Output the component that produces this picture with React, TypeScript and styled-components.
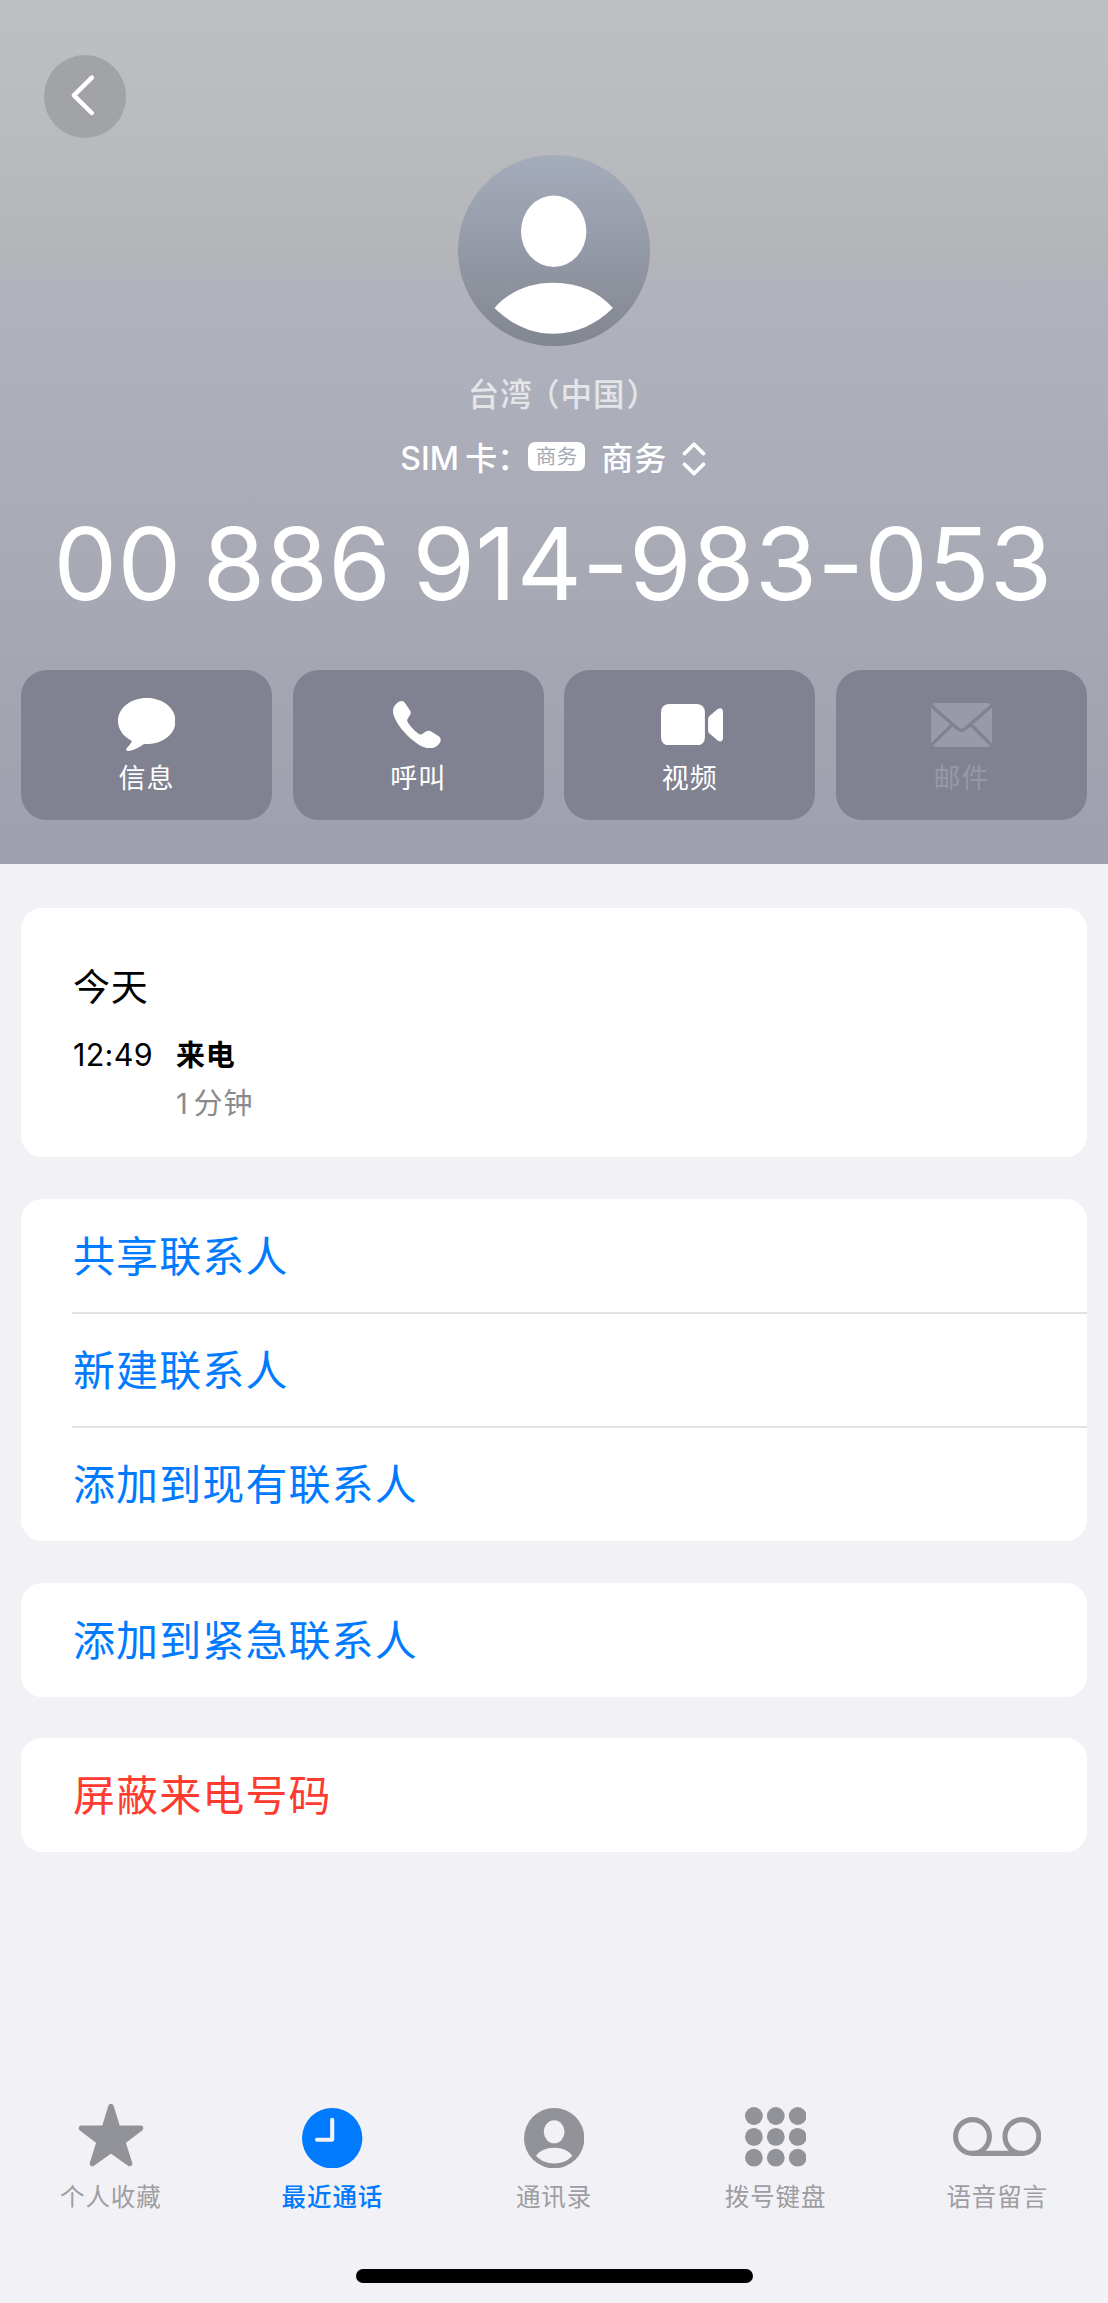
import React from 'react';
import styled, { createGlobalStyle } from 'styled-components';

const GlobalStyle = createGlobalStyle`
  *, *::before, *::after { box-sizing: border-box; }
  html, body { margin: 0; padding: 0; background: #f2f1f6; }
  body { font-family: Inter, "Noto Sans CJK SC", sans-serif; }
  svg { display: block; flex: none; }
`;

const Screen = styled.div`
  width: 1108px;
  height: 2303px;
  display: flex;
  flex-direction: column;
  overflow: hidden;
  background: #f2f1f6;
`;

const Hero = styled.header`
  height: 863.5px;
  flex: none;
  display: flex;
  flex-direction: column;
  align-items: center;
  padding: 55px 21px 0;
  background: linear-gradient(180deg, #bebfc3 0%, #babbbf 15%, #b4b5b9 29.5%, #b0b3bc 33.5%, #a9abb7 60%, #a3a5b1 80%, #9ea0ad 100%);
  color: #fff;
`;

const BackButton = styled.button`
  align-self: flex-start;
  width: 82px;
  height: 82.5px;
  margin-left: 23px;
  padding: 0;
  border: 0;
  border-radius: 50%;
  display: flex;
  align-items: center;
  justify-content: center;
  background: #a2a3a7;
`;

const Avatar = styled.div`
  width: 191.4px;
  height: 191.4px;
  flex: none;
  margin-top: 17px;
  border-radius: 50%;
  background: linear-gradient(180deg, #a5acbb, #828690);
`;

const Region = styled.div`
  height: 40px;
  margin: 29.3px 0 0 3px;
  font-size: 31.5px;
  line-height: 40px;
  letter-spacing: 1px;
  font-weight: 500;
  white-space: nowrap;
  color: #e4e5e9;
`;

const Paren = styled.span<{ $lead?: number }>`
  margin-left: ${(p) => p.$lead ?? 0}px;
  font-family: "Noto Sans CJK SC", sans-serif;
  font-feature-settings: "halt";
  line-height: 20px;
`;

const SimRow = styled.div`
  height: 40px;
  margin: 24px 2px 0 0;
  display: flex;
  align-items: center;
  font-size: 32px;
  line-height: 40px;
  font-weight: 500;
  white-space: nowrap;
`;

const SimLabel = styled.span`
  width: 128px;
  word-spacing: -2px;
`;

const SimBadge = styled.span`
  width: 57px;
  height: 29px;
  margin-top: -5px;
  border-radius: 7px;
  background: #fff;
  color: #a6a8b3;
  font-size: 20.5px;
  line-height: 30px;
  letter-spacing: 0.6px;
  font-weight: 400;
  text-align: center;
`;

const SimName = styled.span`
  margin: 0 14.5px 0 16px;
  letter-spacing: 1px;
`;

const PhoneNumber = styled.h1`
  height: 110px;
  margin: 29px 2px 0 0;
  font-size: 101px;
  line-height: 110px;
  font-weight: 400;
  letter-spacing: 0.3px;
  word-spacing: -7.5px;
  white-space: nowrap;
`;

const Actions = styled.div`
  width: 100%;
  margin-top: 51.7px;
  display: grid;
  grid-template-columns: repeat(4, 1fr);
  gap: 20.5px;
`;

const ActionButton = styled.button<{ $disabled?: boolean }>`
  height: 150.3px;
  padding: 0;
  border: 0;
  border-radius: 26px;
  display: flex;
  flex-direction: column;
  align-items: center;
  background: #808292;
  color: ${(p) => (p.$disabled ? '#9798a6' : '#fff')};
  font-family: inherit;
`;

const ActionIcon = styled.span<{ $shift?: number }>`
  height: 89px;
  padding-top: 20.5px;
  padding-left: ${(p) => Math.max(0, p.$shift ?? 0)}px;
  padding-right: ${(p) => Math.max(0, -(p.$shift ?? 0))}px;
  display: flex;
  align-items: center;
`;

const ActionLabel = styled.span`
  font-size: 27px;
  line-height: 40px;
  letter-spacing: 1px;
`;

const Cards = styled.main`
  flex: 1;
  display: flex;
  flex-direction: column;
  gap: 41.5px;
  padding: 44px 21px 0;
`;

const Card = styled.section`
  border-radius: 21px;
  background: #fff;
  overflow: hidden;
`;

const CallLog = styled(Card)`
  height: 249.5px;
  padding: 55.5px 52px 0;
`;

const LogDay = styled.h2`
  margin: 0;
  font-size: 37px;
  line-height: 50px;
  letter-spacing: 0.8px;
  font-weight: 400;
  color: #000;
`;

const LogEntry = styled.div`
  display: grid;
  grid-template-columns: 103px 1fr;
  margin-top: 19px;
  font-size: 29px;
  line-height: 48px;
`;

const LogTime = styled.span`
  height: 46px;
  font-size: 30.5px;
  line-height: 45px;
  letter-spacing: 0.3px;
`;

const LogKind = styled.span`
  font-weight: 600;
  letter-spacing: 0.8px;
`;

const LogDuration = styled.span`
  grid-column: 2;
  letter-spacing: 1px;
  word-spacing: -4.5px;
  line-height: 48px;
  color: #8a8a8e;
`;

const Row = styled.div<{ $danger?: boolean }>`
  height: 114.2px;
  padding-left: 52px;
  font-size: 42px;
  line-height: 116px;
  letter-spacing: 1.1px;
  color: ${(p) => (p.$danger ? '#ff3b30' : '#007aff')};
`;

const Divider = styled.div`
  height: 2px;
  margin: -1px 0 -1px 51px;
  background: #e2e2e4;
`;

const TabBar = styled.nav`
  height: 170px;
  flex: none;
  display: grid;
  grid-template-columns: repeat(5, 1fr);
  padding-top: 3.5px;
`;

const Tab = styled.div<{ $active?: boolean }>`
  display: flex;
  flex-direction: column;
  align-items: center;
  color: ${(p) => (p.$active ? '#007aff' : '#929398')};
`;

const TabIcon = styled.span<{ $lift?: number }>`
  height: 70px;
  padding-bottom: ${(p) => (p.$lift ?? 0) * 2}px;
  display: flex;
  align-items: center;
`;

const TabLabel = styled.span<{ $active?: boolean }>`
  margin-top: 6px;
  font-size: 24.5px;
  line-height: 36px;
  letter-spacing: 0.9px;
  font-weight: ${(p) => (p.$active ? 500 : 400)};
  color: ${(p) => (p.$active ? '#007aff' : '#9d9da2')};
`;

const HomeArea = styled.footer`
  height: 33.7px;
  flex: none;
  display: flex;
  justify-content: center;
`;

const HomeBar = styled.div`
  width: 397px;
  height: 13.3px;
  border-radius: 7px;
  background: #000;
`;

const BackIcon = () => (
  <svg width="82" height="82" viewBox="0 0 82 82" fill="none" stroke="#fff" strokeWidth="4.5" strokeLinecap="round" strokeLinejoin="round">
    <path d="M47.8 22.6 29.9 40.3 47.8 58" />
  </svg>
);

const AvatarIcon = () => (
  <svg width="191.4" height="191.4" viewBox="0 0 191.4 191.4" fill="#fff">
    <ellipse cx="95.7" cy="76.3" rx="32.7" ry="35.7" />
    <path d="M36.5 153C51 136.500 71 127.700 95.700 127.700S140.500 136.500 154.900 153C137.500 170 117.500 178.700 95.700 178.700S54 170 36.500 153Z" />
  </svg>
);

const UpDownIcon = () => (
  <svg width="24" height="36" viewBox="0 0 24 36" fill="none" stroke="#fff" strokeWidth="3.6" strokeLinecap="round" strokeLinejoin="round">
    <path d="M2.500 12.600 12 3.200 21.500 12.600M2.500 23.200 12 32.600 21.500 23.200" />
  </svg>
);

const MessageIcon = () => (
  <svg width="57.500" height="53" viewBox="0 0 57.5 53" fill="currentColor">
    <path d="M28.750 0C44.800 0 57.500 10 57.500 23S45 46 28.500 46C26.500 46 26 45.900 25.200 46.500 21 49.700 15.500 52.500 10.300 52.900 8.500 53 7.500 51.500 8.700 50.200 11.300 47.500 13 45.500 13.600 43.800 13.800 43.200 13.500 42.800 12.700 42.300 5 38 0 31 0 23 0 10 12.700 0 28.750 0Z" />
  </svg>
);

const PhoneIcon = () => (
  <svg width="47.700" height="47.300" viewBox="0 0 47.7 47.3" fill="currentColor">
    <path d="M3.400 2.700C5 1 7 0 8.800 0 10.300 0 11.200.700 12.200 2.200L16.900 9.200C18 11 18 12.400 17 14L14.700 17.800C14 19 14 20 14.700 21.200 17.500 25.500 21.500 29.800 25.800 32.900 26.900 33.700 28 33.700 29.100 33L33.400 30.300C35 29.400 36.600 29.400 38.200 30.400L45.300 35.100C46.900 36.200 47.700 37.200 47.700 38.700 47.700 40.700 46.400 42.800 44.500 44.600 42.500 46.500 39.800 47.300 37 47.300 31.500 47.300 25.500 44.400 18.500 38.300 11 31.700 5 24.300 2 17.500.600 14.300 0 11.800 0 9.700 0 7 1.300 4.700 3.400 2.700Z" />
  </svg>
);

const VideoIcon = () => (
  <svg width="62" height="41.500" viewBox="0 0 62 41.5" fill="currentColor">
    <rect width="43.900" height="41.500" rx="8" />
    <path d="M47.100 15.200C47.100 13.800 47.500 12.900 48.500 12L56.700 5.100C59 3.200 62 4.400 62 7.500V34C62 37.200 59 38.400 56.700 36.500L48.500 29.500C47.500 28.600 47.100 27.700 47.100 26.300Z" />
  </svg>
);

const MailIcon = () => (
  <svg width="61" height="44" viewBox="0 0 61 44">
    <rect width="61" height="44" rx="5" fill="#999aa8" />
    <path d="M-1 1.500 26.800 25.800Q30.500 28.800 34.200 25.800L62 1.500M-1 43.500 21.300 21.500M62 43.500 39.700 21.500" fill="none" stroke="#808292" strokeWidth="3.400" />
  </svg>
);

const StarIcon = () => (
  <svg width="66" height="64" viewBox="0 0 66 64" fill="currentColor" stroke="currentColor" strokeWidth="5.500" strokeLinejoin="round">
    <path d="M33 3.600 39.700 25.200 62.500 25.200 44.700 38.900 51.600 60.500 33 47.200 14.400 60.500 21.300 38.900 3.500 25.200 26.300 25.200Z" />
  </svg>
);

const ClockIcon = () => (
  <svg width="60.400" height="60.400" viewBox="0 0 60.4 60.4">
    <circle cx="30.200" cy="30.200" r="30.200" fill="currentColor" />
    <path d="M30.200 11.800V31.800H15" fill="none" stroke="#f2f1f6" strokeWidth="4.100" strokeLinecap="round" strokeLinejoin="round" />
  </svg>
);

const ContactIcon = () => (
  <svg width="60.400" height="60.400" viewBox="0 0 60.4 60.4">
    <circle cx="30.200" cy="30.200" r="30.200" fill="currentColor" />
    <ellipse cx="30.200" cy="23.800" rx="10.400" ry="11.500" fill="#f2f1f6" />
    <path d="M12 47.800C16 42.500 22 39.700 30.200 39.700S44.400 42.500 48.400 47.800C44 52.800 37.500 55.500 30.200 55.500S16.400 52.800 12 47.800Z" fill="#f2f1f6" />
  </svg>
);

const KeypadIcon = () => (
  <svg width="61.600" height="60" viewBox="0 0 61.6 60" fill="currentColor">
    {[9, 29.9, 50.7].map((cy) =>
      [8.9, 30.8, 52.7].map((cx) => <circle key={`${cx}-${cy}`} cx={cx} cy={cy} r="8.900" />),
    )}
  </svg>
);

const VoicemailIcon = () => (
  <svg width="88.400" height="39" viewBox="0 0 88.4 39" fill="none" stroke="currentColor" strokeWidth="5.100">
    <circle cx="19.500" cy="19.500" r="16.900" />
    <circle cx="68.900" cy="19.500" r="16.900" />
    <path d="M19.500 36.400H68.900" />
  </svg>
);

const actions = [
  { label: '信息', icon: <MessageIcon /> },
  { label: '呼叫', icon: <PhoneIcon />, shift: -2 },
  { label: '视频', icon: <VideoIcon />, shift: 3.5 },
  { label: '邮件', icon: <MailIcon />, disabled: true },
];

const tabs = [
  { label: '个人收藏', icon: <StarIcon />, lift: 2.5 },
  { label: '最近通话', icon: <ClockIcon />, active: true },
  { label: '通讯录', icon: <ContactIcon /> },
  { label: '拨号键盘', icon: <KeypadIcon />, lift: 0.5 },
  { label: '语音留言', icon: <VoicemailIcon />, lift: 1 },
];

export default function App() {
  return (
    <>
      <GlobalStyle />
      <Screen>
        <Hero>
          <BackButton aria-label="返回">
            <BackIcon />
          </BackButton>
          <Avatar>
            <AvatarIcon />
          </Avatar>
          <Region>
            台湾<Paren $lead={11}>（</Paren>中国<Paren $lead={1}>）</Paren>
          </Region>
          <SimRow>
            <SimLabel>SIM 卡：</SimLabel>
            <SimBadge>商务</SimBadge>
            <SimName>商务</SimName>
            <UpDownIcon />
          </SimRow>
          <PhoneNumber>00 886 914-983-053</PhoneNumber>
          <Actions>
            {actions.map((a) => (
              <ActionButton key={a.label} $disabled={a.disabled} disabled={a.disabled}>
                <ActionIcon $shift={a.shift}>{a.icon}</ActionIcon>
                <ActionLabel>{a.label}</ActionLabel>
              </ActionButton>
            ))}
          </Actions>
        </Hero>

        <Cards>
          <CallLog>
            <LogDay>今天</LogDay>
            <LogEntry>
              <LogTime>12:49</LogTime>
              <LogKind>来电</LogKind>
              <LogDuration>1 分钟</LogDuration>
            </LogEntry>
          </CallLog>
          <Card>
            <Row>共享联系人</Row>
            <Divider />
            <Row>新建联系人</Row>
            <Divider />
            <Row>添加到现有联系人</Row>
          </Card>
          <Card>
            <Row>添加到紧急联系人</Row>
          </Card>
          <Card>
            <Row $danger>屏蔽来电号码</Row>
          </Card>
        </Cards>

        <TabBar>
          {tabs.map((t) => (
            <Tab key={t.label} $active={t.active}>
              <TabIcon $lift={t.lift}>{t.icon}</TabIcon>
              <TabLabel $active={t.active}>{t.label}</TabLabel>
            </Tab>
          ))}
        </TabBar>
        <HomeArea>
          <HomeBar />
        </HomeArea>
      </Screen>
    </>
  );
}
